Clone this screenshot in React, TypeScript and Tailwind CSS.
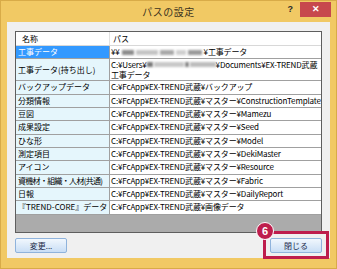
import React from "react";

const jp = { fontFamily: '"Noto Sans CJK JP", "Noto Sans", sans-serif' };

type Row = { name: string; path: React.ReactNode; tall?: boolean; selected?: boolean; tight?: boolean };

const Blur = ({ w, tone = "bg-[#9a9a9a]" }: { w: number; tone?: string }) => (
  <span className={`inline-block h-[5px] align-middle blur-[1px] ${tone}`} style={{ width: w }} />
);

const rows: Row[] = [
  {
    name: "工事データ",
    selected: true,
    path: (
      <span className="flex items-center">
        ¥¥
        <span className="flex items-center mx-[2px] gap-[2px]">
          <Blur w={12} tone="bg-[#8c8c8c]" />
          <Blur w={22} tone="bg-[#c4c4c4]" />
          <Blur w={14} tone="bg-[#a8a8a8]" />
          <Blur w={10} tone="bg-[#cfcfcf]" />
          <Blur w={14} tone="bg-[#9a9a9a]" />
        </span>
        ¥工事データ
      </span>
    ),
  },
  {
    name: "工事データ(持ち出し)",
    tall: true,
    path: (
      <span className="flex flex-col leading-[10px]">
        <span className="flex items-center h-[10px]">
          C:¥Users¥
          <span className="flex items-center gap-[1px]">
            <Blur w={6} tone="bg-[#7a7a7a]" />
            <Blur w={30} tone="bg-[#c8c8c8]" />
            <Blur w={4} tone="bg-[#8a8a8a]" />
            <Blur w={26} tone="bg-[#bdbdbd]" />
          </span>
          ¥Documents¥EX-TREND武蔵
        </span>
        <span className="h-[10px]">工事データ</span>
      </span>
    ),
  },
  { name: "バックアップデータ", path: "C:¥FcApp¥EX-TREND武蔵¥バックアップ" },
  { name: "分類情報", path: "C:¥FcApp¥EX-TREND武蔵¥マスター¥ConstructionTemplate" },
  { name: "豆図", path: "C:¥FcApp¥EX-TREND武蔵¥マスター¥Mamezu" },
  { name: "成果設定", path: "C:¥FcApp¥EX-TREND武蔵¥マスター¥Seed" },
  { name: "ひな形", path: "C:¥FcApp¥EX-TREND武蔵¥マスター¥Model" },
  { name: "測定項目", path: "C:¥FcApp¥EX-TREND武蔵¥マスター¥DekiMaster" },
  { name: "アイコン", path: "C:¥FcApp¥EX-TREND武蔵¥マスター¥Resource" },
  { name: "資機材・組織・人材(共通)", tight: true, path: "C:¥FcApp¥EX-TREND武蔵¥マスター¥Fabric" },
  { name: "日報", path: "C:¥FcApp¥EX-TREND武蔵¥マスター¥DailyReport" },
  { name: "『TREND-CORE』データ", path: "C:¥FcApp¥EX-TREND武蔵¥画像データ" },
];

const Button = ({ label }: { label: string }) => (
  <button className="w-[52px] h-[15px] rounded-[2px] border border-[#8fb3dc] bg-gradient-to-b from-[#f1f7fd] to-[#c9def5] text-[8px] leading-none text-[#1c2a4a] flex items-center justify-center">
    {label}
  </button>
);

export default function App() {
  return (
    <div
      className="w-[337px] h-[269px] bg-[#f1c964] border border-[#d8ab48] flex flex-col text-black overflow-hidden"
      style={jp}
    >
      {/* title bar */}
      <div className="h-[21px] grid grid-cols-[1fr_auto_1fr] items-start shrink-0">
        <div />
        <div className="text-[10px] leading-[21px] text-[#3b3220] tracking-[0.5px]">パスの設定</div>
        <div className="flex justify-end items-start pr-[5px] pt-[1px]">
          <span className="text-[9px] font-bold leading-[14px] mr-[7px] text-[#2a2a2a]" style={{ fontFamily: '"Liberation Sans", sans-serif' }}>?</span>
          <div className="w-[31px] h-[15px] bg-[#c7484d] flex items-center justify-center text-white text-[9px] font-bold" style={{ fontFamily: '"Liberation Sans", sans-serif' }}>
            ✕
          </div>
        </div>
      </div>

      {/* client area */}
      <div className="flex-1 mx-[6px] mb-[10px] bg-[#f0f0f0] px-[8px] pt-[9px] flex flex-col">
        <div className="h-[202px] border border-[#5e5e5e] bg-[#ababab] flex flex-col text-[8px]">
          <div className="h-[14px] bg-white flex border-b border-[#d8d8d8] shrink-0">
            <div className="w-[94px] border-r border-[#e2e2e2] pl-[6px] leading-[13px]">名称</div>
            <div className="flex-1 pl-[3px] leading-[13px]">パス</div>
          </div>
          {rows.map((r) => (
            <div
              key={r.name}
              className={`flex border-b border-[#a0a0a0] shrink-0 ${r.tall ? "h-[22px]" : "h-[13.33px]"}`}
            >
              <div
                className={`w-[94px] border-r border-[#a0a0a0] pl-[2px] flex items-center whitespace-nowrap overflow-hidden ${
                  r.selected ? "bg-[#3399ff] text-white" : "bg-[#e5f6fc]"
                } ${r.tight ? "tracking-[-0.7px]" : ""}`}
              >
                {r.name}
              </div>
              <div className="flex-1 bg-white pl-[1px] flex items-center whitespace-nowrap overflow-hidden tracking-[-0.15px]">
                {r.path}
              </div>
            </div>
          ))}
        </div>

        <div className="flex justify-between items-center mt-[5px]">
          <Button label="変更..." />
          <div className="relative">
            <Button label="閉じる" />
            <div className="absolute -left-[7px] -top-[7px] w-[66px] h-[28px] border-[3px] border-[#be1d4c]" />
            <div className="absolute -left-[14px] -top-[16px] w-[18px] h-[18px] rounded-full bg-[#be1d4c] border-[1.5px] border-white flex items-center justify-center text-white text-[11px] font-bold" style={{ fontFamily: '"Liberation Sans", sans-serif' }}>
              6
            </div>
          </div>
        </div>
      </div>
    </div>
  );
}
